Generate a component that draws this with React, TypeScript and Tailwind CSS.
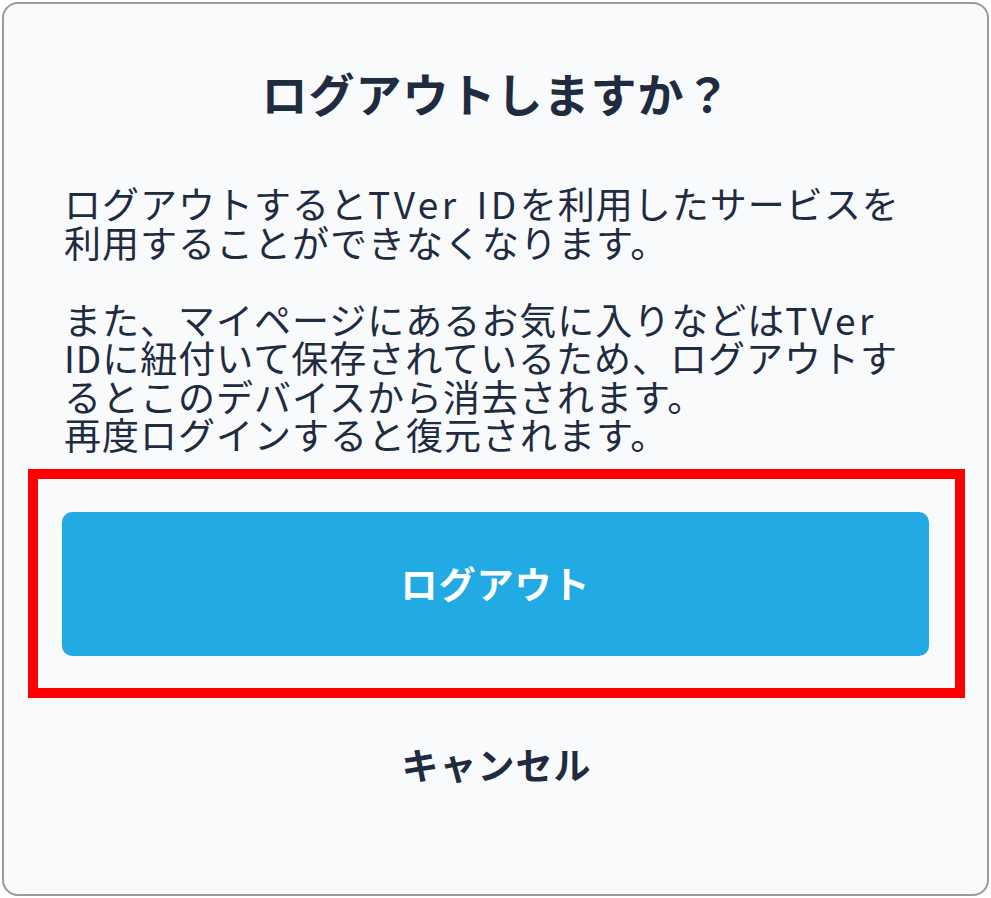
import React from "react";

// ログアウト確認ダイアログ
// 英字部分は少し字間を広げて和文に揃える
const Latin = ({ children }: { children: React.ReactNode }) => (
  <span className="tracking-[3.5px] [word-spacing:5px]">{children}</span>
);

const bodyLines: React.ReactNode[] = [
  <>
    ログアウトすると<Latin>TVer ID</Latin>を利用したサービスを
  </>,
  "利用することができなくなります。",
  "",
  <>
    また、マイページにあるお気に入りなどは<Latin>TVer</Latin>
  </>,
  "IDに紐付いて保存されているため、ログアウトす",
  "るとこのデバイスから消去されます。",
  "再度ログインすると復元されます。",
];

export default function App() {
  return (
    <div className="w-[991px] h-[898px] bg-white p-[2px] font-['Noto_Sans_CJK_JP',sans-serif]">
      <div className="h-[894px] rounded-[16px] border-2 border-[#9a9a9a] bg-[#f8fafc] text-[#1f2b3f] flex flex-col pt-[60px] pl-[24px] pr-[22px]">
        {/* タイトル */}
        <h1 className="text-center text-[46px] leading-[56px] font-bold tracking-[1px]">
          ログアウトしますか？
        </h1>

        {/* 説明文 */}
        <div className="mt-[64px] pl-[36px] text-[37px] leading-[38.5px] tracking-[1px]">
          {bodyLines.map((line, i) => (
            <p key={i} className="whitespace-nowrap h-[38.5px]">
              {line}
            </p>
          ))}
        </div>

        {/* ログアウトボタン（強調枠つき） */}
        <div className="mt-[15px] h-[229px] border-[10px] border-[#ff0000] pl-[24px] pr-[26px] pt-[33px]">
          <button
            type="button"
            className="w-full h-[144px] rounded-[10px] bg-[#21aae3] text-white text-[37px] font-bold tracking-[1px]"
          >
            ログアウト
          </button>
        </div>

        {/* キャンセル */}
        <button
          type="button"
          className="mt-[42px] text-center text-[37px] leading-[48px] font-bold tracking-[1px] text-[#1f2b3f]"
        >
          キャンセル
        </button>
      </div>
    </div>
  );
}
